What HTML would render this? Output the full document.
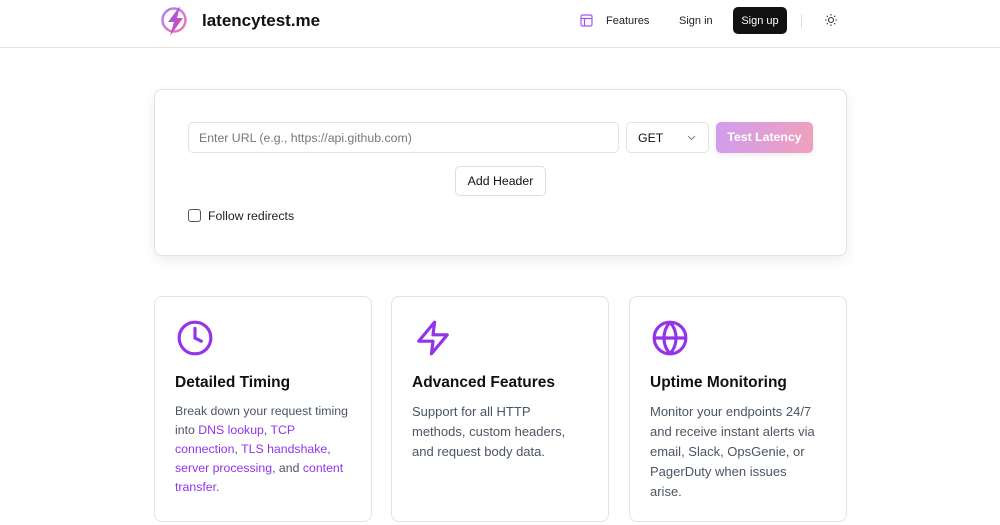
<!DOCTYPE html>
<html><head><meta charset="utf-8"><style>
*{box-sizing:border-box;margin:0;padding:0}
body{width:1000px;height:525px;overflow:hidden;background:#fff;font-family:"Liberation Sans",Arial,sans-serif;color:#111;position:relative}
.hdr{position:absolute;left:0;top:0;width:1000px;height:48px;border-bottom:1px solid #e5e5e5}
.abs{position:absolute}
.card{position:absolute;border:1px solid #e3e3e3;border-radius:8px;background:#fff}
.feat h3{position:absolute;left:20px;top:77px;font-size:15.5px;font-weight:700;color:#111}
.feat p{position:absolute;left:20px;top:105px;width:180px;font-size:12.3px;line-height:19px;color:#4b5563}
.feat a{color:#9333ea;text-decoration:none}
</style></head><body>
<div class="hdr">
<svg class="abs" style="left:160px;top:4px" width="30" height="34" viewBox="0 0 30 34"><defs><linearGradient id="g" x1="0" y1="0" x2="1" y2="1"><stop offset="0" stop-color="#8b5cf6"/><stop offset="1" stop-color="#ec4899"/></linearGradient></defs><circle cx="14" cy="16" r="11.5" fill="none" stroke="url(#g)" stroke-width="2.5" opacity=".75"/><path d="M20 2 L8 18 L14 18 L10 32 L23 14 L17 14 Z" fill="url(#g)"/></svg>
<div class="abs" style="left:202px;top:11px;font-size:17px;font-weight:700">latencytest.me</div>
<svg class="abs" style="left:580px;top:14px" width="13" height="13" viewBox="0 0 13 13" fill="none" stroke="#a855f7" stroke-width="1.2"><rect x="1" y="1" width="11" height="11" rx="1.5"/><path d="M1 4.5H12M4.5 4.5V12"/></svg>
<div class="abs" style="left:606px;top:15px;font-size:11px;color:#222">Features</div>
<div class="abs" style="left:679px;top:15px;font-size:11px;color:#222">Sign in</div>
<div class="abs" style="left:733px;top:7px;width:54px;height:27px;background:#111;border-radius:5px;color:#fff;font-size:11px;text-align:center;line-height:28px">Sign up</div>
<div class="abs" style="left:801px;top:14px;width:1px;height:14px;background:#ddd"></div>
<svg class="abs" style="left:824px;top:13px" width="14" height="14" viewBox="0 0 14 14" fill="none" stroke="#333" stroke-width="1.1"><circle cx="7" cy="7" r="2.5"/><path d="M7 1v1.5M7 11.5V13M1 7h1.5M11.5 7H13M2.8 2.8l1 1M10.2 10.2l1 1M2.8 11.2l1-1M10.2 3.8l1-1"/></svg>
</div>
<div class="card" style="left:154px;top:89px;width:693px;height:167px;box-shadow:0 4px 12px rgba(0,0,0,.08)"></div>
<div class="abs" style="left:188px;top:122px;width:431px;height:31px;border:1px solid #e2e2e2;border-radius:5px;font-size:12.3px;color:#777;padding:8px 10px">Enter URL (e.g., https://api.github.com)</div>
<div class="abs" style="left:626px;top:122px;width:83px;height:31px;border:1px solid #e2e2e2;border-radius:5px;font-size:12.3px;color:#111;padding:8px 11px">GET<svg style="position:absolute;right:12px;top:12px" width="9" height="6" viewBox="0 0 9 6" fill="none" stroke="#888" stroke-width="1.1"><path d="M1 1l3.5 3.5L8 1"/></svg></div>
<div class="abs" style="left:716px;top:122px;width:97px;height:31px;border-radius:5px;background:linear-gradient(90deg,#d19ded,#efa0bd);color:#fff;font-size:12.3px;font-weight:700;text-align:center;line-height:31px;box-shadow:0 2px 6px rgba(0,0,0,.08)">Test Latency</div>
<div class="abs" style="left:455px;top:166px;width:91px;height:30px;border:1px solid #ddd;border-radius:5px;font-size:12.3px;text-align:center;line-height:28px;color:#111">Add Header</div>
<div class="abs" style="left:188px;top:209px;width:13px;height:13px;border:1.3px solid #555;border-radius:3px"></div>
<div class="abs" style="left:208px;top:209px;font-size:12.3px;color:#222">Follow redirects</div>

<div class="card feat" style="left:154px;top:296px;width:218px;height:226px">
<svg class="abs" style="left:21px;top:22px" width="38" height="38" viewBox="0 0 24 24" fill="none" stroke="#9333ea" stroke-width="2" stroke-linecap="round"><circle cx="12" cy="12" r="10"/><path d="M12 6v6l4 2"/></svg>
<h3>Detailed Timing</h3>
<p>Break down your request timing into <a>DNS lookup</a>, <a>TCP connection</a>, <a>TLS handshake</a>, <a>server processing</a>, and <a>content transfer</a>.</p></div>
<div class="card feat" style="left:391px;top:296px;width:218px;height:226px">
<svg class="abs" style="left:22px;top:22px" width="38" height="38" viewBox="0 0 24 24" fill="none" stroke="#9333ea" stroke-width="2" stroke-linejoin="round" stroke-linecap="round"><path d="M13 2L3 14h9l-1 8 10-12h-9l1-8z"/></svg>
<h3>Advanced Features</h3>
<p style="font-size:13px;line-height:20px;width:160px">Support for all HTTP methods, custom headers, and request body data.</p></div>
<div class="card feat" style="left:629px;top:296px;width:218px;height:226px">
<svg class="abs" style="left:21px;top:22px" width="38" height="38" viewBox="0 0 24 24" fill="none" stroke="#9333ea" stroke-width="2"><circle cx="12" cy="12" r="10"/><path d="M2 12h20M12 2a15 15 0 0 1 0 20M12 2a15 15 0 0 0 0 20"/></svg>
<h3>Uptime Monitoring</h3>
<p style="font-size:13px;line-height:20px;width:168px">Monitor your endpoints 24/7 and receive instant alerts via email, Slack, OpsGenie, or PagerDuty when issues arise.</p></div>
</body></html>
